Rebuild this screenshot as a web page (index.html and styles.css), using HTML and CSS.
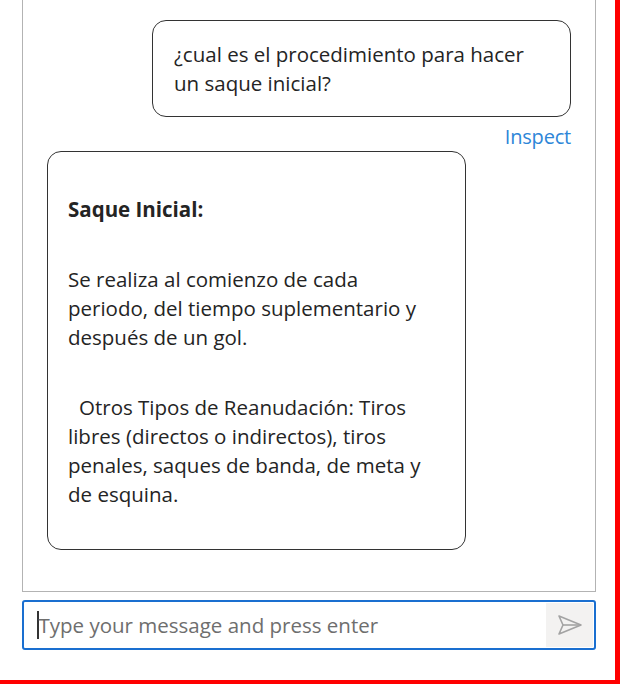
FILE: index.html
```html
<!DOCTYPE html>
<html lang="es">
<head>
<meta charset="utf-8">
<title>Chat</title>
<link rel="stylesheet" href="styles.css">
</head>
<body>
<div class="frame">
  <div class="panel">
    <div class="msg-user">
      <div class="bubble user">¿cual es el procedimiento para hacer un saque inicial?</div>
      <a class="inspect" href="#">Inspect</a>
    </div>
    <div class="bubble bot">
      <p class="title">Saque Inicial:</p>
      <p>Se realiza al comienzo de cada<br>periodo, del tiempo suplementario y<br>después de un gol.</p>
      <p class="indent">Otros Tipos de Reanudación: Tiros<br>libres (directos o indirectos), tiros<br>penales, saques de banda, de meta y<br>de esquina.</p>
    </div>
  </div>
  <div class="composer">
    <div class="field"><span class="caret"></span><span class="placeholder">Type your message and press enter</span></div>
    <button class="send" type="button" aria-label="Send">
      <svg width="26" height="22" viewBox="0 0 26 22" fill="none" stroke="#a3a3a3" stroke-width="1.6" stroke-linejoin="round">
        <path d="M2 2 L24 11 L2 20 L6 11 Z"/>
        <path d="M6 11 H24"/>
      </svg>
    </button>
  </div>
</div>
</body>
</html>
```

FILE: styles.css
```css
* { box-sizing: border-box; }
html, body { margin: 0; padding: 0; background: #fff; }
body {
  font-family: "Open Sans", "Noto Sans", sans-serif;
  color: #242424;
}
.frame {
  width: 620px;
  height: 684px;
  border-right: 5px solid #ff0000;
  border-bottom: 4px solid #ff0000;
  padding-left: 22px;
  overflow: hidden;
}
.panel {
  width: 574px;
  height: 592px;
  border: 1px solid #b3b3b3;
  border-top: none;
  padding: 20px 24px 0 24px;
  display: flex;
  flex-direction: column;
}
.msg-user {
  display: flex;
  flex-direction: column;
  align-items: flex-end;
}
.bubble {
  border: 1.5px solid #333;
  border-radius: 14px;
  background: #fff;
  font-size: 20.5px;
  line-height: 29px;
}
.bubble.user {
  width: 419px;
  padding: 19px 20px 18px 21px;
}
.inspect {
  color: #2d86d8;
  text-decoration: none;
  font-size: 20px;
  line-height: 24px;
  margin-top: 8px;
  height: 26px;
  letter-spacing: -0.2px;
}
.bubble.bot {
  align-self: flex-start;
  width: 419px;
  height: 399px;
  padding: 43px 20px 0 20px;
  display: flex;
  flex-direction: column;
  gap: 41px;
  white-space: nowrap;
}
.bubble.bot p { margin: 0; }
.bubble.bot .title { font-weight: 700; }
.bubble.bot .indent { text-indent: 11px; }
.composer {
  margin-top: 8px;
  width: 574px;
  height: 50px;
  border: 2px solid #1a6fd0;
  border-radius: 3px;
  display: flex;
  align-items: stretch;
  padding: 1px 1px 1px 0;
}
.field {
  flex: 1;
  display: flex;
  align-items: center;
  padding-left: 13px;
}
.caret {
  display: inline-block;
  width: 1.5px;
  height: 28px;
  background: #333;
}
.placeholder {
  font-size: 20.5px;
  color: #6e6e6e;
}
.send {
  width: 47px;
  border: none;
  background: #f3f2f1;
  padding: 0;
  display: flex;
  align-items: center;
  justify-content: center;
}
```
